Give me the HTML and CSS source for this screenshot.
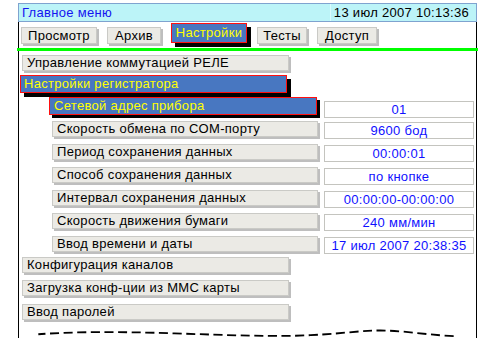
FILE: index.html
```html
<!DOCTYPE html>
<html lang="ru">
<head>
<meta charset="utf-8">
<title>Главное меню</title>
<link rel="stylesheet" href="styles.css">
</head>
<body>
<div class="screen">
  <div class="titlebar">
    <span class="title">Главное меню</span>
    <span class="clock">13 июл 2007 10:13:36</span>
  </div>
  <div class="frame">
    <div class="tabs">
      <div class="btn tab w-view">Просмотр</div>
      <div class="btn tab w-arch">Архив</div>
      <div class="btn tab sel w-set">Настройки</div>
      <div class="btn tab w-test">Тесты</div>
      <div class="btn tab w-acc">Доступ</div>
    </div>
    <div class="rule"></div>
    <div class="menu">
      <div class="row l1 r-first"><div class="btn item">Управление коммутацией РЕЛЕ</div></div>
      <div class="row l1 r-selgroup"><div class="btn item sel">Настройки регистратора</div></div>
      <div class="row l2 r-sel"><div class="btn item sel">Сетевой адрес прибора</div><div class="val">01</div></div>
      <div class="row l2"><div class="btn item">Скорость обмена по COM-порту</div><div class="val">9600 бод</div></div>
      <div class="row l2"><div class="btn item">Период сохранения данных</div><div class="val">00:00:01</div></div>
      <div class="row l2"><div class="btn item">Способ сохранения данных</div><div class="val">по кнопке</div></div>
      <div class="row l2"><div class="btn item">Интервал сохранения данных</div><div class="val">00:00:00-00:00:00</div></div>
      <div class="row l2"><div class="btn item">Скорость движения бумаги</div><div class="val">240 мм/мин</div></div>
      <div class="row l2 r-last"><div class="btn item">Ввод времени и даты</div><div class="val">17 июл 2007 20:38:35</div></div>
      <div class="row l1"><div class="btn item">Конфигурация каналов</div></div>
      <div class="row l1 r-tall"><div class="btn item">Загрузка конф-ции из ММС карты</div></div>
      <div class="row l1"><div class="btn item">Ввод паролей</div></div>
    </div>
    <svg class="tear" width="461" height="12" viewBox="0 0 461 12">
      <path d="M0,8 C40,5 90,5 150,7 S 260,11 300,9 S 360,3 385,4 S 440,10 461,10" fill="none" stroke="#000" stroke-width="2" stroke-dasharray="10 5" stroke-dashoffset="2"/>
    </svg>
  </div>
</div>
</body>
</html>
```
FILE: styles.css
```css
html, body {
  margin: 0;
  padding: 0;
  background: #ffffff;
}
body {
  font-family: "Liberation Sans", Arial, sans-serif;
  font-size: 13px;
  letter-spacing: 0.3px;
  color: #000;
}
.screen {
  margin-left: 18px;
  width: 459px;
  padding-top: 3px;
}
.titlebar {
  height: 17px;
  border: 1px solid #7fa3cf;
  background: #bcf4f8;
  display: flex;
  align-items: center;
  justify-content: space-between;
  line-height: 17px;
}
.title {
  color: #1515f0;
  padding-left: 3px;
}
.clock {
  color: #000;
  border-left: 1px solid #dafcfe;
  padding-left: 3px;
  padding-right: 7px;
}
.frame {
  height: 316px;
  border-left: 1px solid #000;
  border-right: 1px solid #000;
  display: flex;
  flex-direction: column;
}
.tabs {
  height: 28px;
  display: flex;
  align-items: flex-start;
  gap: 10px;
  padding: 1px 0 0 2px;
}
.btn {
  box-sizing: border-box;
  background: #ebeae5;
  border: 1px solid #cacac6;
  box-shadow: 2px 2px 0 #bebebe;
  white-space: nowrap;
  overflow: hidden;
}
.tab {
  height: 17px;
  margin-top: 4px;
  line-height: 15px;
  text-align: center;
}
.tab.sel {
  height: 20px;
  margin-top: 0;
  line-height: 17px;
}
.w-view { width: 76px; }
.w-arch { width: 54px; }
.w-set { width: 76px; }
.w-test { width: 50px; }
.w-acc { width: 60px; }
.sel {
  background: #4877c1;
  border: 1px solid #ff1010;
  color: #ffff00;
  box-shadow: 4px 4px 0 #000;
}
.rule {
  height: 3px;
  background: #00ff00;
  margin: 0 -2px 0 -2px;
}
.menu {
  padding-top: 4px;
  display: flex;
  flex-direction: column;
}
.row {
  display: flex;
  align-items: flex-start;
  height: 23px;
}
.item {
  height: 16px;
  line-height: 14px;
  padding-left: 4px;
}
.l1 .item {
  margin-left: 3px;
  width: 267px;
}
.l2 .item {
  margin-left: 33px;
  width: 266px;
}
.r-first { height: 20px; }
.r-selgroup { height: 22px; }
.l1 .item.sel {
  margin-left: 1px;
  height: 18px;
  line-height: 16px;
  width: 267px;
  padding-left: 3px;
}
.r-sel { height: 24px; }
.l2 .item.sel {
  margin-left: 30px;
  width: 268px;
  height: 18px;
  line-height: 16px;
  padding-left: 4px;
  box-shadow: 3px 3px 0 #000;
}
.r-last { height: 21px; }
.r-tall { height: 24px; }
.val {
  box-sizing: border-box;
  width: 150px;
  height: 17px;
  margin-top: 1px;
  margin-left: 6px;
  border: 1px solid #c4c4bf;
  background: #fff;
  color: #1010ff;
  text-align: center;
  line-height: 15px;
  white-space: nowrap;
}
.r-sel .val {
  margin-top: 4px;
  margin-left: 7px;
}
.tear {
  display: block;
  margin: auto -2px 0 -2px;
}
```
